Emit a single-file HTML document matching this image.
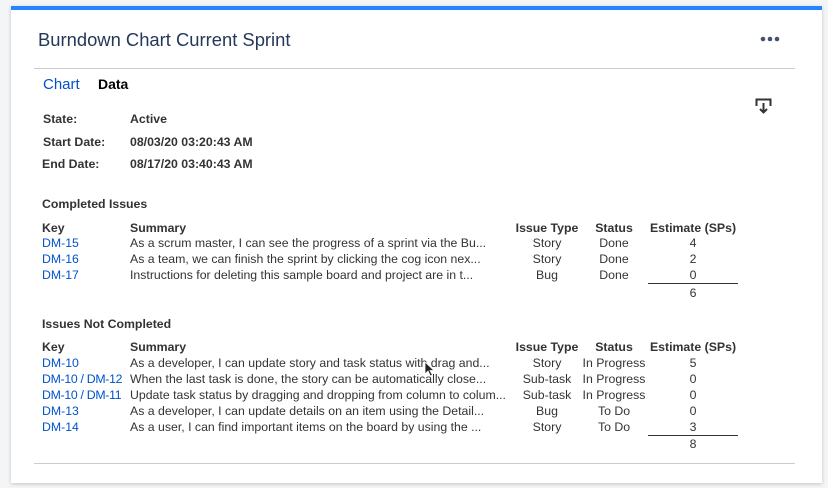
<!DOCTYPE html>
<html><head><style>
body{margin:0;width:828px;height:487px;background:#f4f5f7;font-family:"Liberation Sans",Arial,sans-serif;position:relative;overflow:hidden}
.card{position:absolute;left:11px;top:6px;width:811px;height:477px;background:#fff;box-shadow:0 1px 4px rgba(0,0,0,.2);border-top:4px solid #2684ff;box-sizing:border-box}
.w{position:absolute;left:0;top:1px;width:828px;height:487px}
.a{position:absolute;white-space:nowrap;font-size:12.3px;color:#333}
.b{font-weight:bold}
.l{color:#0052cc}
.c{transform:translateX(-50%)}
.hr{position:absolute;height:1px;background:#ccc}
</style></head><body>
<div class="card"></div>
<div class="a" style="left:38px;top:29px;font-size:18.4px;color:#253858">Burndown Chart Current Sprint</div>
<svg style="position:absolute;left:760px;top:36px" width="20" height="6"><circle cx="3" cy="3" r="2.3" fill="#42526e"/><circle cx="10" cy="3" r="2.3" fill="#42526e"/><circle cx="17" cy="3" r="2.3" fill="#42526e"/></svg>
<div class="hr" style="left:34px;top:68px;width:761px"></div>
<div class="w">
<div class="a" style="left:43px;top:75px;font-size:15px;color:#0052cc">Chart</div>
<div class="a b" style="left:98px;top:75px;font-size:14px;color:#000">Data</div>
<svg style="position:absolute;left:755px;top:97px" width="18" height="17"><path d="M1.5 8V1.5H15.5V8" fill="none" stroke="#333" stroke-width="2"/><path d="M8.5 5v10M5 11l3.5 3.5 3.5-3.5" fill="none" stroke="#333" stroke-width="2"/></svg>
<div class="a b" style="left:43px;top:111px">State:</div><div class="a b" style="left:130px;top:111px">Active</div>
<div class="a b" style="left:43px;top:134px">Start Date:</div><div class="a b" style="left:130px;top:134px">08/03/20 03:20:43 AM</div>
<div class="a b" style="left:42px;top:156px">End Date:</div><div class="a b" style="left:130px;top:156px">08/17/20 03:40:43 AM</div>

<div class="a b" style="left:42px;top:196px">Completed Issues</div>
<div class="a b" style="left:42px;top:220px">Key</div><div class="a b" style="left:130px;top:220px">Summary</div>
<div class="a b c" style="left:547px;top:220px">Issue Type</div><div class="a b c" style="left:614px;top:220px">Status</div><div class="a b c" style="left:693px;top:220px">Estimate (SPs)</div>
<div class="a l" style="left:42px;top:235px">DM-15</div><div class="a" style="left:130px;top:235px">As a scrum master, I can see the progress of a sprint via the Bu...</div><div class="a c" style="left:547px;top:235px">Story</div><div class="a c" style="left:614px;top:235px">Done</div><div class="a c" style="left:693px;top:235px">4</div>
<div class="a l" style="left:42px;top:251px">DM-16</div><div class="a" style="left:130px;top:251px">As a team, we can finish the sprint by clicking the cog icon nex...</div><div class="a c" style="left:547px;top:251px">Story</div><div class="a c" style="left:614px;top:251px">Done</div><div class="a c" style="left:693px;top:251px">2</div>
<div class="a l" style="left:42px;top:267px">DM-17</div><div class="a" style="left:130px;top:267px">Instructions for deleting this sample board and project are in t...</div><div class="a c" style="left:547px;top:267px">Bug</div><div class="a c" style="left:614px;top:267px">Done</div><div class="a c" style="left:693px;top:267px">0</div>
<div class="hr" style="left:648px;top:282px;width:90px;background:#333"></div>
<div class="a c" style="left:693px;top:285px">6</div>

<div class="a b" style="left:42px;top:316px">Issues Not Completed</div>
<div class="a b" style="left:42px;top:339px">Key</div><div class="a b" style="left:130px;top:339px">Summary</div>
<div class="a b c" style="left:547px;top:339px">Issue Type</div><div class="a b c" style="left:614px;top:339px">Status</div><div class="a b c" style="left:693px;top:339px">Estimate (SPs)</div>
<div class="a l" style="left:42px;top:355px">DM-10</div><div class="a" style="left:130px;top:355px">As a developer, I can update story and task status with drag and...</div><div class="a c" style="left:547px;top:355px">Story</div><div class="a c" style="left:614px;top:355px">In Progress</div><div class="a c" style="left:693px;top:355px">5</div>
<div class="a l" style="left:42px;top:371px;letter-spacing:-0.3px">DM-10 / DM-12</div><div class="a" style="left:130px;top:371px">When the last task is done, the story can be automatically close...</div><div class="a c" style="left:547px;top:371px">Sub-task</div><div class="a c" style="left:614px;top:371px">In Progress</div><div class="a c" style="left:693px;top:371px">0</div>
<div class="a l" style="left:42px;top:387px;letter-spacing:-0.3px">DM-10 / DM-11</div><div class="a" style="left:130px;top:387px">Update task status by dragging and dropping from column to colum...</div><div class="a c" style="left:547px;top:387px">Sub-task</div><div class="a c" style="left:614px;top:387px">In Progress</div><div class="a c" style="left:693px;top:387px">0</div>
<div class="a l" style="left:42px;top:403px">DM-13</div><div class="a" style="left:130px;top:403px">As a developer, I can update details on an item using the Detail...</div><div class="a c" style="left:547px;top:403px">Bug</div><div class="a c" style="left:614px;top:403px">To Do</div><div class="a c" style="left:693px;top:403px">0</div>
<div class="a l" style="left:42px;top:419px">DM-14</div><div class="a" style="left:130px;top:419px">As a user, I can find important items on the board by using the ...</div><div class="a c" style="left:547px;top:419px">Story</div><div class="a c" style="left:614px;top:419px">To Do</div><div class="a c" style="left:693px;top:419px">3</div>
<div class="hr" style="left:648px;top:434px;width:90px;background:#333"></div>
<div class="a c" style="left:693px;top:436px">8</div>
<svg style="position:absolute;left:424px;top:360px" width="12" height="16"><path d="M1 1v12l3-3 2.5 5 2-1-2.5-4.5H10z" fill="#222" stroke="#fff" stroke-width=".8"/></svg>
</div>
<div class="hr" style="left:34px;top:463px;width:761px"></div>
</body></html>
